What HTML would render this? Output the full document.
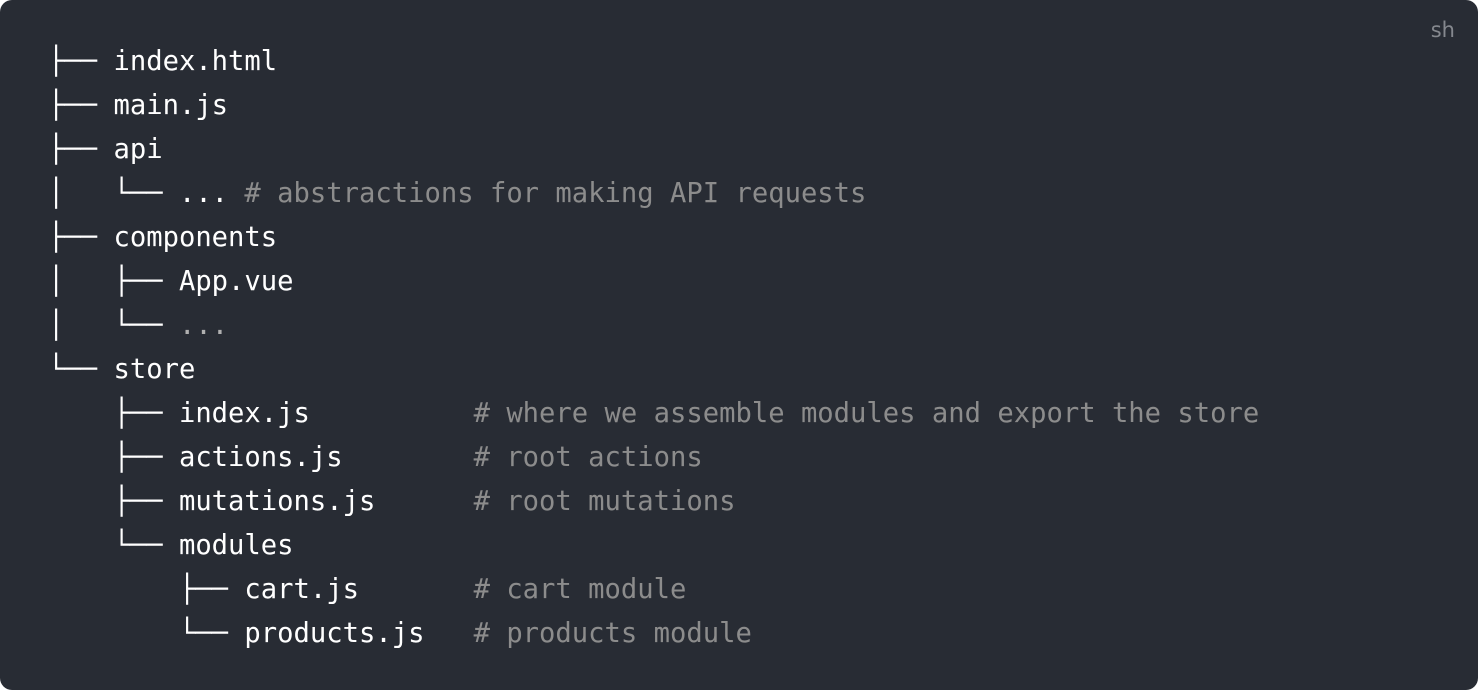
<!DOCTYPE html>
<html><head><meta charset="utf-8"><style>
html,body{margin:0;padding:0;background:#fff;width:1478px;height:690px;overflow:hidden}
.box{position:absolute;left:0;top:0;width:1478px;height:690px;background:#282c34;border-radius:12px}
pre{position:absolute;left:48px;top:40px;margin:0;font-family:"DejaVu Sans Mono","Liberation Mono",monospace;font-size:27.2px;line-height:44px;color:#fff}
.c{color:#8c8c8c}
.d{color:#b0b0b0}
.sh{position:absolute;right:23px;top:18px;font-family:"DejaVu Sans","Liberation Sans",sans-serif;font-size:21px;color:#85888e}
</style></head><body><div class="box"><div class="sh">sh</div>
<pre>├── index.html
├── main.js
├── api
│   └── ... <span class="c"># abstractions for making API requests</span>
├── components
│   ├── App.vue
│   └── <span class="d">...</span>
└── store
    ├── index.js          <span class="c"># where we assemble modules and export the store</span>
    ├── actions.js        <span class="c"># root actions</span>
    ├── mutations.js      <span class="c"># root mutations</span>
    └── modules
        ├── cart.js       <span class="c"># cart module</span>
        └── products.js   <span class="c"># products module</span></pre></div></body></html>
